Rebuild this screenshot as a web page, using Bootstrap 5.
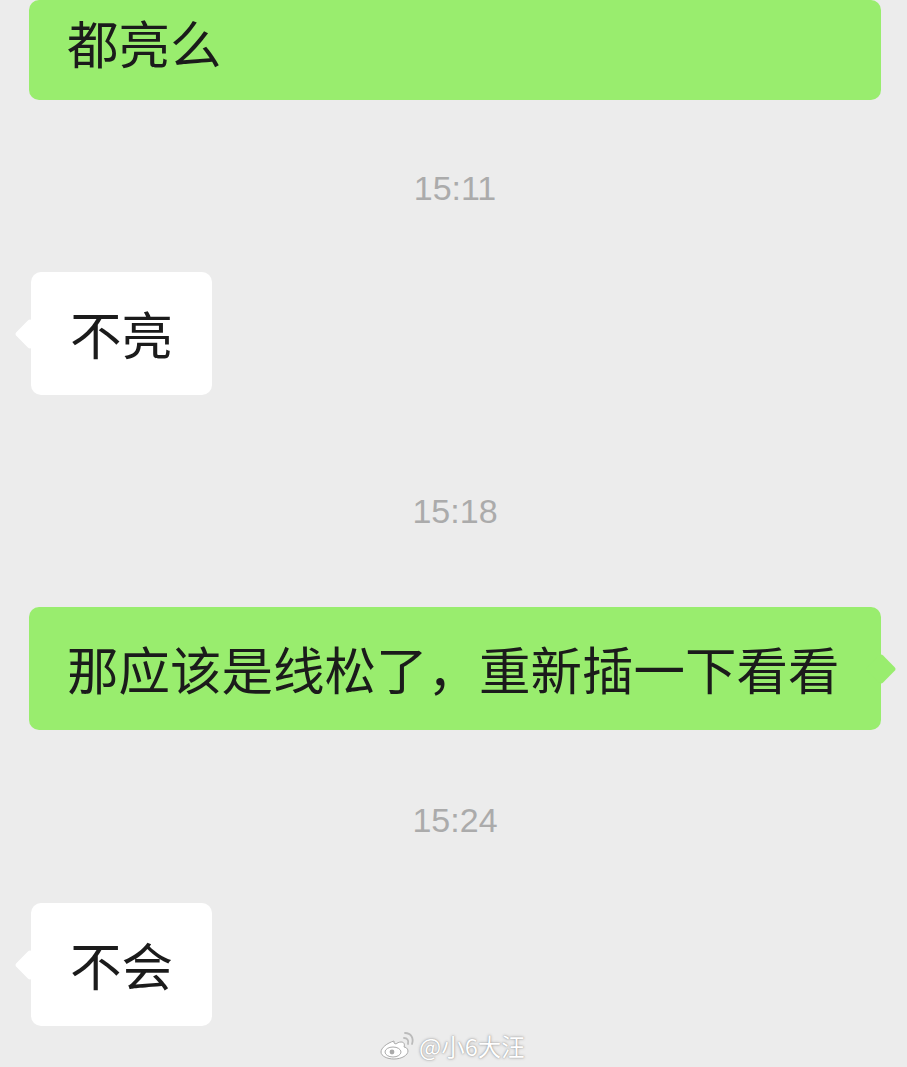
<!DOCTYPE html>
<html lang="zh"><head><meta charset="utf-8">
<link href="https://cdn.jsdelivr.net/npm/bootstrap@5.3.0/dist/css/bootstrap.min.css" rel="stylesheet">
<style>
html,body{height:1067px;overflow:hidden}
body{background:#ececec;font-family:"Noto Sans CJK SC",sans-serif;position:relative}
.chat{height:1067px}
.bub{height:123px;flex:none;font-size:51.5px;line-height:1;color:#1b1b1b;border-radius:10px;position:relative;white-space:nowrap}
.me{background:#99ed6e;width:852px;margin-left:29px;padding:0 0 2px 38px}
.you{background:#fff;width:181px;margin-left:31px;padding:0 0 2px 39px}
.you::before,.me::after{content:"";position:absolute;top:50%;width:22px;height:22px;transform:translateY(-50%) rotate(45deg);border-radius:3px}
.you::before{left:-12px;background:#fff}
.me::after{right:-11px;background:#99ed6e}
.first{height:100px;align-items:flex-end;padding-bottom:33px}
.first::after{display:none}
.tm{flex:none;font-family:"Liberation Sans",sans-serif;font-size:34px;line-height:1;color:#ababab;text-align:center;width:910px}
.t1{height:172px;padding-top:71px}
.t2{height:212px;padding-top:99px}
.t3{height:173px;padding-top:73px}
.wm{position:absolute;left:379px;top:1030px;color:#fff;font-size:23.5px;line-height:32px;text-shadow:0 0 3px #999,0 0 1px #999}
</style></head><body>
<main class="chat d-flex flex-column">
<div class="bub me first d-flex">都亮么</div>
<div class="tm t1">15:11</div>
<div class="bub you d-flex align-items-center">不亮</div>
<div class="tm t2">15:18</div>
<div class="bub me d-flex align-items-center">那应该是线松了，重新插一下看看</div>
<div class="tm t3">15:24</div>
<div class="bub you d-flex align-items-center">不会</div>
</main>
<div class="wm d-flex align-items-center gap-1"><svg width="36" height="28" viewBox="0 0 36 28"><g fill="#fff" stroke="#aaa" stroke-width="1"><path d="M15 9C8 11 2 16 2 20c0 4 6 7 13 7 8 0 14-4 14-8 0-3-3-4-4-4 1-3 0-5-3-5-2 0-4 1-5 2-1 0-1-1-2-1z"/><ellipse cx="14" cy="20" rx="8" ry="5"/></g><circle cx="13" cy="20" r="2.4" fill="#aaa"/><path d="M25 6c3 0 5 2 4 6M26 1c6 0 9 5 7 11" fill="none" stroke="#bbb" stroke-width="1.8" stroke-linecap="round"/></svg><span>@小6大汪</span></div>
</body></html>
